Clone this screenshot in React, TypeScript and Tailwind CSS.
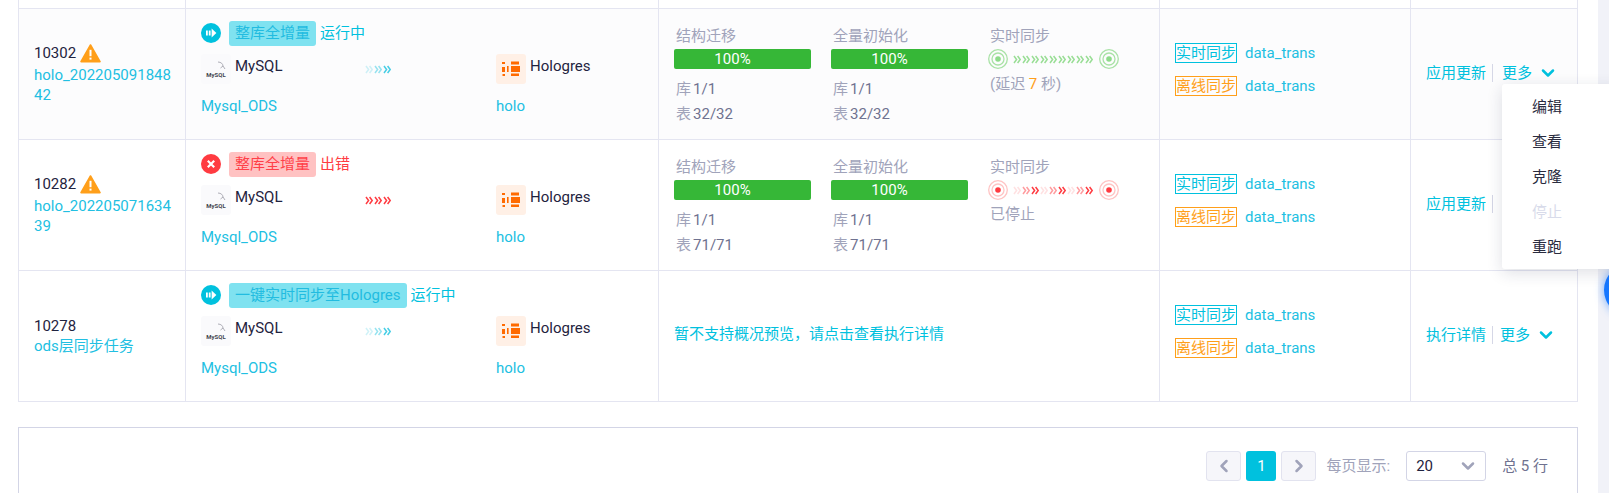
import { ChevronDown, ChevronLeft, ChevronRight } from "lucide-react";

const CYAN = "#00c1de";
const RED = "#ff3b41";
const GREEN = "#8edb8a";

function DoubleChevron({ color, opacity }: { color: string; opacity: number }) {
  return (
    <svg width="9" height="9" viewBox="0 0 9 9" fill="none" stroke={color} strokeWidth="1.5" opacity={opacity} className="shrink-0">
      <polyline points="1,1 3.6,4.5 1,8" />
      <polyline points="4.6,1 7.2,4.5 4.6,8" />
    </svg>
  );
}

function Arrows({ color, ramp }: { color: string; ramp: number[] }) {
  return (
    <div className="flex items-center">
      {ramp.map((o, i) => (
        <DoubleChevron key={i} color={color} opacity={o} />
      ))}
    </div>
  );
}

function Ring({ outer, dot }: { outer: string; dot: string }) {
  return (
    <svg width="20" height="20" viewBox="0 0 20 20" fill="none" className="shrink-0">
      <circle cx="10" cy="10" r="9.3" stroke={outer} strokeWidth="1.3" />
      <circle cx="10" cy="10" r="6" stroke={outer} strokeWidth="1.3" />
      <circle cx="10" cy="10" r="2.8" fill={dot} />
    </svg>
  );
}

function WarnIcon() {
  return (
    <svg width="21" height="19" viewBox="0 0 21 19" className="shrink-0">
      <path d="M10.5 1 L20 17.6 H1 Z" fill="#ff9f1a" stroke="#ff9f1a" strokeWidth="1.6" strokeLinejoin="round" />
      <rect x="9.5" y="5.8" width="2" height="6.4" fill="#fff" />
      <rect x="9.5" y="13.6" width="2" height="2" fill="#fff" />
    </svg>
  );
}

function RunIcon() {
  return (
    <svg width="20" height="20" viewBox="0 0 20 20" className="shrink-0">
      <circle cx="10" cy="10" r="10" fill={CYAN} />
      <rect x="5" y="7.5" width="1.8" height="5" fill="#fff" />
      <rect x="7.8" y="7.5" width="1.8" height="5" fill="#fff" />
      <path d="M10.6 5.6 L15.4 10 L10.6 14.4 Z" fill="#fff" />
    </svg>
  );
}

function ErrIcon() {
  return (
    <svg width="20" height="20" viewBox="0 0 20 20" className="shrink-0">
      <circle cx="10" cy="10" r="10" fill={RED} />
      <path d="M6.8 6.8 L13.2 13.2 M13.2 6.8 L6.8 13.2" stroke="#fff" strokeWidth="2.2" />
    </svg>
  );
}

function MysqlLogo() {
  return (
    <div className="relative flex h-[30px] w-[30px] shrink-0 items-end justify-center rounded-[3px] bg-[#fafafc] pb-[6px]">
      <svg width="9" height="9" viewBox="0 0 9 9" fill="none" stroke="#9a9aa5" strokeWidth="0.8" className="absolute right-[5px] top-[7px]">
        <path d="M1 1 C4 1 6 3 6 5 L8 8 M6 5 L3.5 7" />
      </svg>
      <span className="text-[6px] font-bold leading-[7px] text-[#44464f]">MySQL</span>
    </div>
  );
}

function HoloLogo() {
  return (
    <div className="flex h-[30px] w-[30px] shrink-0 items-center justify-center rounded-[3px] bg-[#fff0e6]">
      <svg width="18" height="16" viewBox="0 0 18 16" fill="#ff6a00">
        <rect x="0" y="1" width="3" height="2" />
        <rect x="0" y="6" width="3" height="5" />
        <rect x="0.5" y="13" width="2.5" height="2" />
        <rect x="5" y="5" width="1.6" height="6" />
        <rect x="9" y="0.5" width="8" height="3" />
        <rect x="9" y="5" width="9" height="6" />
        <rect x="9" y="12.5" width="8" height="2.5" />
      </svg>
    </div>
  );
}

function Progress({ label, db, table }: { label: string; db: string; table: string }) {
  return (
    <div className="w-[157px]">
      <div className="pl-[2px] text-[15px] leading-[24px] text-[#a0a3ba]">{label}</div>
      <div className="mt-[1px] flex h-[20px] w-[137px] items-center justify-center rounded-[2px] bg-[#36b737] pr-[20px] text-[15px] text-white">100%</div>
      <div className="mt-[8px] flex gap-[2px] pl-[2px] text-[15px] leading-[25px] text-[#6f7290]">
        <span className="text-[#a0a3ba]">库</span>
        <span>{db}</span>
      </div>
      <div className="flex gap-[2px] pl-[2px] text-[15px] leading-[25px] text-[#6f7290]">
        <span className="text-[#a0a3ba]">表</span>
        <span>{table}</span>
      </div>
    </div>
  );
}

function Actions({ first, dividerCls }: { first: string; dividerCls: string }) {
  return (
    <div className="flex items-center pb-[2px] pl-[15px] text-[15px] text-[#00c1de]">
      <span className="leading-[20px]">{first}</span>
      <span className={`h-[18px] w-px bg-[#d5d7e6] ${dividerCls}`} />
      <span className="leading-[20px]">更多</span>
      <ChevronDown size={20} strokeWidth={3} className="ml-[6px]" />
    </div>
  );
}

function Targets() {
  return (
    <div className="flex flex-col gap-[13px] pl-[15px] pt-[34px] text-[15px]">
      {[
        { name: "实时同步", cls: "border-[#00c1de] text-[#00c1de]" },
        { name: "离线同步", cls: "border-[#ff9f1a] text-[#ff9f1a]" },
      ].map((t) => (
        <div key={t.name} className="flex items-center">
          <span className={`flex h-[20px] w-[62px] items-center justify-center whitespace-nowrap border ${t.cls}`}>{t.name}</span>
          <span className="ml-[8px] leading-[20px] text-[#22bfe2]">data_trans</span>
        </div>
      ))}
    </div>
  );
}

type RowProps = {
  id: string;
  warn?: boolean;
  name: string[];
  error?: boolean;
  badge: string;
  status: string;
  bg?: string;
  sync: React.ReactNode;
  action: string;
  dividerCls: string;
};

function Row(r: RowProps) {
  const statusColor = r.error ? "text-[#ff3b41]" : "text-[#00c1de]";
  const badgeCls = r.error ? "bg-[#ffc2c2] text-[#ff4048]" : "bg-[#7fe2f0] text-[#22bce0]";
  const ramp = [0.2, 0.45, 0.8];
  return (
    <div className={`grid h-[131px] grid-cols-[167px_473px_501px_251px_168px] border-b border-[#e4e5f1] ${r.bg ?? "bg-white"}`}>
      <div className="flex flex-col justify-center border-l border-[#e4e5f1] pl-[15px] text-[15px] leading-[20px] text-[#1f2340]">
        <div className="flex items-center gap-[4px]">
          {r.id}
          {r.warn && <WarnIcon />}
        </div>
        <div className={`text-[#22bfe2] ${r.warn ? "mt-[2px]" : ""}`}>
          {r.name.map((n) => (
            <div key={n}>{n}</div>
          ))}
        </div>
      </div>
      <div className="border-l border-[#e4e5f1] pl-[15px] pt-[12px]">
        <div className="flex items-center text-[15px]">
          <span className="-mt-[1px]">{r.error ? <ErrIcon /> : <RunIcon />}</span>
          <span className={`ml-[8px] flex h-[25px] items-center rounded-[3px] px-[6px] ${badgeCls}`}>{r.badge}</span>
          <span className={`ml-[4px] ${statusColor}`}>{r.status}</span>
        </div>
        <div className="mt-[8px] grid grid-cols-[295px_1fr] text-[15px] leading-[24px] text-[#1f2340]">
          <div className="flex items-start">
            <MysqlLogo />
            <span className="ml-[4px] w-[130px]">MySQL</span>
            <div className="pt-[11px]">
              <Arrows color={r.error ? RED : "#19c3e0"} ramp={r.error ? [1, 1, 1] : ramp} />
            </div>
          </div>
          <div className="flex items-start">
            <HoloLogo />
            <span className="ml-[4px]">Hologres</span>
          </div>
          <div className="mt-[10px] text-[#22bfe2]">Mysql_ODS</div>
          <div className="mt-[10px] text-[#22bfe2]">holo</div>
        </div>
      </div>
      <div className="border-l border-[#e4e5f1] pl-[15px] pt-[15px] text-[15px]">{r.sync}</div>
      <div className="border-l border-[#e4e5f1]">
        <Targets />
      </div>
      <div className="flex items-center border-x border-[#e4e5f1]">
        <Actions first={r.action} dividerCls={r.dividerCls} />
      </div>
    </div>
  );
}

function Overview({ table, sync }: { table: string; sync: React.ReactNode }) {
  return (
    <div className="flex">
      <Progress label="结构迁移" db="1/1" table={table} />
      <Progress label="全量初始化" db="1/1" table={table} />
      <div>
        <div className="pl-[2px] leading-[24px] text-[#a0a3ba]">实时同步</div>
        {sync}
      </div>
    </div>
  );
}

export default function App() {
  const greenRamp = [0.9, 0.9, 0.9, 0.9, 0.9, 0.9, 0.9, 0.9, 0.9];
  const redRamp = [0.15, 0.5, 1, 0.15, 0.5, 1, 0.15, 0.5, 1];
  return (
    <div className="relative flex h-[493px] w-full overflow-hidden bg-white font-['Roboto','Noto_Sans_CJK_SC',sans-serif]">
      <div className="w-[1598px] shrink-0 pl-[18px]">
        <div className="grid h-[9px] w-[1560px] grid-cols-[167px_473px_501px_251px_168px] border-b border-[#e4e5f1]">
          <div className="border-l border-[#e4e5f1]" />
          <div className="border-l border-[#e4e5f1]" />
          <div className="border-l border-[#e4e5f1]" />
          <div className="border-l border-[#e4e5f1]" />
          <div className="border-x border-[#e4e5f1]" />
        </div>
        <div className="w-[1560px]">
          <Row
            id="10302"
            warn
            name={["holo_202205091848", "42"]}
            badge="整库全增量"
            status="运行中"
            bg="bg-[#fcfcfd]"
            action="应用更新"
            dividerCls="ml-[6px] mr-[9px]"
            sync={
              <Overview
                table="32/32"
                sync={
                  <>
                    <div className="mt-[1px] flex h-[20px] items-center gap-[5px]">
                      <Ring outer="#a9e2a6" dot={GREEN} />
                      <Arrows color={GREEN} ramp={greenRamp} />
                      <Ring outer="#a9e2a6" dot={GREEN} />
                    </div>
                    <div className="mt-[3px] pl-[2px] leading-[25px] text-[#a0a3ba]">
                      (延迟 <span className="text-[#ff9f1a]">7</span> 秒)
                    </div>
                  </>
                }
              />
            }
          />
          <Row
            id="10282"
            warn
            error
            name={["holo_202205071634", "39"]}
            badge="整库全增量"
            status="出错"
            action="应用更新"
            dividerCls="ml-[6px] mr-[9px]"
            sync={
              <Overview
                table="71/71"
                sync={
                  <>
                    <div className="mt-[1px] flex h-[20px] items-center gap-[5px]">
                      <Ring outer="#ffc4c4" dot={RED} />
                      <Arrows color={RED} ramp={redRamp} />
                      <Ring outer="#ffc4c4" dot={RED} />
                    </div>
                    <div className="mt-[2px] pl-[2px] leading-[25px] text-[#a0a3ba]">已停止</div>
                  </>
                }
              />
            }
          />
          <Row
            id="10278"
            name={["ods层同步任务"]}
            badge="一键实时同步至Hologres"
            status="运行中"
            action="执行详情"
            dividerCls="ml-[6px] mr-[7px]"
            sync={<div className="pt-[36px] leading-[24px] text-[#00c1de]">暂不支持概况预览，请点击查看执行详情</div>}
          />
        </div>
        <div className="mt-[25px] flex h-[100px] w-[1560px] justify-end border border-[#d3d5e6] pr-[29px] pt-[23px] text-[15px]">
          <div className="flex h-[30px] items-center">
            <button className="flex h-[30px] w-[35px] items-center justify-center rounded-[3px] border border-[#e2e3ef] bg-[#f6f6fa] text-[#a0a3ba]">
              <ChevronLeft size={20} strokeWidth={3} />
            </button>
            <button className="ml-[5px] flex h-[30px] w-[30px] items-center justify-center rounded-[3px] bg-[#00c1de] text-white">1</button>
            <button className="ml-[5px] flex h-[30px] w-[35px] items-center justify-center rounded-[3px] border border-[#e2e3ef] bg-[#f6f6fa] text-[#a0a3ba]">
              <ChevronRight size={20} strokeWidth={3} />
            </button>
            <span className="ml-[10px] whitespace-nowrap text-[#a0a3ba]">每页显示:</span>
            <div className="ml-[16px] flex h-[30px] w-[80px] items-center justify-between rounded-[3px] border border-[#d3d5e6] pl-[9px] pr-[7px] text-[#1f2340]">
              20
              <ChevronDown size={20} strokeWidth={3} className="text-[#a0a3ba]" />
            </div>
            <span className="ml-[16px] whitespace-nowrap text-[#6f7290]">总 5 行</span>
          </div>
        </div>
      </div>
      <div className="flex-1 bg-[#f1f2f8]" />
      {/* floating help button behind the scrollbar edge */}
      <div className="absolute left-[1604px] top-[264px] h-[52px] w-[52px] rounded-full bg-[#1677ff] shadow-[0_0_10px_rgba(22,119,255,0.6)]" />
      {/* open "more" menu */}
      <div className="absolute left-[1502px] top-[84px] flex h-[185px] w-[120px] flex-col rounded-[3px] bg-white pb-[5px] pl-[30px] pt-[6px] text-[15px] leading-[35px] text-[#2a2c3f] shadow-[0_4px_16px_rgba(30,35,70,0.14)]">
        <div>编辑</div>
        <div>查看</div>
        <div>克隆</div>
        <div className="text-[#d8dbea]">停止</div>
        <div>重跑</div>
      </div>
    </div>
  );
}
